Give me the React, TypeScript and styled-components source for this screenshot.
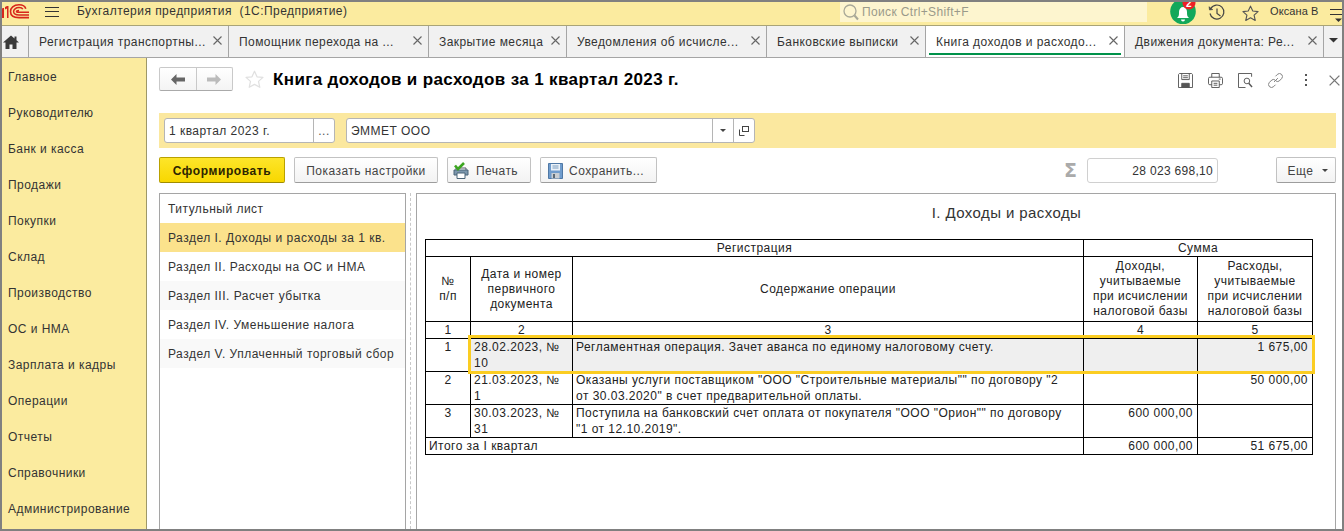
import React from "react";
import styled, { createGlobalStyle } from "styled-components";

const Global = createGlobalStyle`
  html, body { margin: 0; padding: 0; background: #fff; }
  body { font-family: "Liberation Sans", Arial, sans-serif; font-size: 12px; color: #333; letter-spacing: .3px; }
  * { box-sizing: border-box; }
`;

const Frame = styled.div`
  width: 1344px; height: 531px; border: 2px solid #808080; display: flex; flex-direction: column; overflow: hidden; background: #fff;
`;
const TopBar = styled.header`
  height: 24px; flex: none; display: flex; align-items: flex-start; background: #fbeb9f;
  border-bottom: 1px solid #a9a477; position: relative;
`;
const LogoBox = styled.div`width: 43px; height: 23px; flex: none;`;
const Burger = styled.div`
  width: 14px; height: 10px; margin-top: 5px; flex: none; margin-right: 18px;
  border-top: 1px solid #333; border-bottom: 1px solid #333; position: relative;
  &::after { content: ""; position: absolute; left: 0; right: 0; top: 3px; height: 1px; background: #333; }
`;
const AppTitle = styled.div`
  font-size: 12px; line-height: 18px; color: #333; width: 763px; flex: none; letter-spacing: .46px;
`;
const Search = styled.div`
  width: 307px; height: 20px; flex: none; background: #fdf5cf; display: flex; align-items: center;
  padding-left: 3px; gap: 3px; color: #9a9a8a; font-size: 12px; letter-spacing: .35px; margin-right: 23px;
`;
const IconSlot = styled.div<{ $w: number; $ml?: number }>`
  width: ${p => p.$w}px; margin-left: ${p => p.$ml ?? 0}px; flex: none; display: flex; align-items: center; justify-content: center; height: 22px;
`;
const UserName = styled.div`
  font-size: 11px; line-height: 18px; width: 50px; color: #333; margin-left: 11px; letter-spacing: .1px; flex: none;
`;
const TabBar = styled.nav`
  height: 32px; flex: none; display: flex; background: #f1f1f1; border-bottom: 1px solid #a5a5a5;
`;
const HomeTab = styled.div`
  width: 27px; flex: none; border-right: 1px solid #a5a5a5; display: flex; align-items: center; padding-left: 1px;
`;
const Tab = styled.div<{ $w: number; $active?: boolean }>`
  width: ${p => p.$w}px; flex: none; border-right: 1px solid #a5a5a5; position: relative; display: flex;
  align-items: center; padding-left: 10px; font-size: 12px; line-height: 16px; white-space: nowrap;
  color: #333; letter-spacing: .44px; background: ${p => (p.$active ? "#fff" : "transparent")};
  ${p => p.$active && `&::after { content: ""; position: absolute; left: 3px; right: 3px; bottom: 2px; height: 2px; background: #00924a; }`}
`;
const TabClose = styled.span`
  position: absolute; right: 6px; top: 10px; width: 9px; height: 9px; display: flex;
`;
const TabMore = styled.div`
  flex: 1; display: flex; align-items: center; justify-content: center; padding-bottom: 2px;
`;
const Body = styled.div`flex: 1; display: flex; min-height: 0;`;
const Sidebar = styled.aside`
  width: 145px; flex: none; background: #fbeb9f; border-right: 1px solid #9e9868; display: flex; flex-direction: column;
`;
const SideItem = styled.div`
  height: 36px; flex: none; display: flex; align-items: center; padding: 1px 0 0 6px; font-size: 12px; color: #333; letter-spacing: .46px;
`;
const Main = styled.main`
  flex: 1; min-width: 0; display: flex; flex-direction: column; padding: 9px 6px 0 12px; position: relative;
`;
const TitleRow = styled.div`height: 24px; flex: none; display: flex; align-items: center;`;
const NavGroup = styled.div`
  width: 74px; height: 24px; flex: none; display: flex; border: 1px solid #c9c9c9; border-bottom-color: #aaa; border-radius: 2px;
  background: linear-gradient(#fff, #f4f4f4);
`;
const NavBtn = styled.div<{ $split?: boolean }>`
  flex: 1; display: flex; align-items: center; justify-content: center;
  ${p => p.$split && "border-right: 1px solid #c9c9c9;"}
`;
const PageTitle = styled.h1`
  margin: 2px 0 0 -1px; font-size: 17px; line-height: 22px; font-weight: 700; color: #000; letter-spacing: .37px; white-space: nowrap;
`;
const ToolIcons = styled.div`
  position: absolute; top: 13px; right: 0; height: 18px; display: flex; align-items: center;
`;
const FilterBar = styled.div`
  height: 35px; flex: none; margin-top: 22px; background: #fbe89f; padding: 5px; display: flex; gap: 11px;
`;
const Field = styled.div<{ $w: number }>`
  width: ${p => p.$w}px; height: 25px; flex: none; background: #fff; border: 1px solid #b5b5b5; border-radius: 3px;
  display: flex; align-items: center; font-size: 12px; color: #333; letter-spacing: .46px;
`;
const FieldText = styled.div`flex: 1; padding-left: 4px; white-space: nowrap; padding-top: 1px;`;
const FieldBtn = styled.div`
  width: 21px; height: 100%; flex: none; border-left: 1px solid #b5b5b5; display: flex; align-items: center; justify-content: center; color: #555;
`;
const ButtonRow = styled.div`height: 26px; flex: none; margin-top: 9px; display: flex; align-items: center; gap: 9px;`;
const Btn = styled.div<{ $w: number; $primary?: boolean; $pl?: number }>`
  width: ${p => p.$w}px; height: 26px; flex: none; display: flex; align-items: center;
  justify-content: ${p => (p.$pl ? "flex-start" : "center")}; gap: 6px; padding-left: ${p => p.$pl ?? 0}px;
  border-radius: 2px; font-size: 12px; letter-spacing: ${p => (p.$primary ? ".6px" : ".46px")}; padding-top: 1px;
  border: 1px solid ${p => (p.$primary ? "#b9a100" : "#c2c2c2")};
  border-bottom-color: ${p => (p.$primary ? "#a08c00" : "#9d9d9d")};
  background: ${p => (p.$primary ? "linear-gradient(#fde52a, #f8d700)" : "linear-gradient(#fff, #f3f3f3)")};
  color: ${p => (p.$primary ? "#2c2500" : "#444")};
  font-weight: ${p => (p.$primary ? 700 : 400)};
`;
const Sigma = styled.div`
  margin-left: auto; font-size: 19px; font-weight: 700; color: #aaa; width: 14px; letter-spacing: 0; line-height: 20px; font-family: "DejaVu Sans", sans-serif;
`;
const SumField = styled.div`
  width: 131px; height: 25px; flex: none; border: 1px solid #d0d0d0; border-radius: 3px; text-align: right; padding-right: 4px;
  font-size: 12px; line-height: 24px; color: #333; margin-right: 49px;
`;
const MoreBtn = styled(Btn)`gap: 9px; padding-left: 4px;`;
const Content = styled.div`flex: 1; min-height: 0; display: flex; margin-top: 10px;`;
const ListPanel = styled.div`
  width: 247px; flex: none; border: 1px solid #a5a5a5; border-bottom: none; display: flex; flex-direction: column;
`;
const ListItem = styled.div<{ $selected?: boolean; $alt?: boolean }>`
  height: 29px; flex: none; display: flex; align-items: center; padding: 1px 0 0 8px; font-size: 12px; color: #333; letter-spacing: .5px; white-space: nowrap;
  background: ${p => (p.$selected ? "#fbe28c" : p.$alt ? "#f9f9f9" : "#fff")};
`;
const Splitter = styled.div`
  width: 10px; flex: none; position: relative;
  &::after { content: ""; position: absolute; left: 4px; top: 0; bottom: 0; border-left: 1px dashed #c8c8c8; }
`;
const ReportPanel = styled.div`
  width: 920px; flex: none; border: 1px solid #a5a5a5; border-bottom: none; padding-left: 8px;
`;
const ReportTitle = styled.div`
  height: 45px; width: 887px; text-align: center; font-size: 15px; line-height: 18px; padding: 10px 0 0 276px; color: #333; letter-spacing: .42px;
`;
const TableWrap = styled.div`position: relative; width: 887px;`;
const Report = styled.table`
  border-collapse: collapse; table-layout: fixed; width: 887px; font-size: 12px; color: #222; line-height: 15px; letter-spacing: .47px;
`;
const Row = styled.tr<{ $h: number }>`height: ${p => p.$h}px;`;
const Cell = styled.td<{ $align?: "left" | "center" | "right"; $gray?: boolean }>`
  border: 1px solid #000; padding: ${p => (p.$align === "center" ? "0 3px" : "0 4px 0 3px")}; vertical-align: middle;
  text-align: ${p => p.$align ?? "left"}; background: ${p => (p.$gray ? "#efefef" : "transparent")}; overflow: hidden;
`;
const BodyCell = styled(Cell)`vertical-align: top; line-height: 16px; white-space: pre-line;`;
const RowMark = styled.div`
  position: absolute; left: 43px; top: 96px; width: 847px; height: 39px; border: 3px solid #fbcd22; pointer-events: none;
`;

const X = ({ s = 9, c = "#666" }: { s?: number; c?: string }) => (
  <svg width={s} height={s} viewBox="0 0 9 9"><path d="M.5.5l8 8M8.5.5l-8 8" stroke={c} strokeWidth="1.1" fill="none" /></svg>
);

const Logo = () => (
  <svg width="30" height="20" viewBox="0 0 30 20">
    <path d="M0 6.500l1-.5h1V16H0z" fill="#d8261c" />
    <path d="M3 5l2-1h1.500v12H5V6.500L3 7.500z" fill="#d8261c" />
    <path d="M27 15.600H17C11.500 15.600 8.500 13 8.500 9.500S11.500 2.800 17 2.800c3.800 0 6 1.200 6.800 4" fill="none" stroke="#d8261c" strokeWidth="1.600" />
    <path d="M27 12.900H17c-3.300 0-5.400-1.400-5.400-3.400s2.100-3.900 5.400-3.900c2 0 3.300.5 3.800 1.500" fill="none" stroke="#d8261c" strokeWidth="1.500" />
    <path d="M27 10.200H17c-1.500 0-2.500-.2-2.500-.8s1-1 2.500-1" fill="none" stroke="#d8261c" strokeWidth="1.500" />
  </svg>
);
const Magnifier = () => (
  <svg width="16" height="18" viewBox="0 0 16 18"><circle cx="7" cy="8" r="6" fill="none" stroke="#a8a898" strokeWidth="1.3" /><path d="M11.500 12.500l3.500 4" stroke="#a8a898" strokeWidth="2" /></svg>
);
const Bell = () => (
  <svg width="26" height="22" viewBox="0 0 26 22" style={{ overflow: "hidden" }}>
    <circle cx="13" cy="9.500" r="12.800" fill="#13a85a" />
    <path d="M7 16c2-1.500 2-3 2-6 0-3 1.800-5 4-5s4 2 4 5c0 3 0 4.500 2 6z" fill="#fff" />
    <path d="M11 17.500h4a2 2 0 01-4 0z" fill="#fff" />
    <circle cx="19" cy="1" r="6.500" fill="#ed2024" />
    <text x="19" y="5" fontSize="10" fontWeight="700" fill="#fff" textAnchor="middle" fontFamily="Liberation Sans">2</text>
  </svg>
);
const History = () => (
  <svg width="18" height="18" viewBox="0 0 18 18" fill="none" stroke="#444" strokeWidth="1.200">
    <path d="M2.800 4.500A7 7 0 112 9.500" /><path d="M1 2.500l.5 3.500 3.500-.5" fill="#444" strokeWidth=".6" /><path d="M9 4.500V9.500l3.500 2.500" />
  </svg>
);
const StarIcon = ({ c = "#555", s = 17, w = 1.2 }: { c?: string; s?: number; w?: number }) => (
  <svg width={s} height={s} viewBox="0 0 18 18"><path d="M9 1.200l2.400 5.200 5.600.6-4.200 3.800 1.200 5.600L9 13.600 4 16.400l1.200-5.600L1 7l5.600-.6z" fill="none" stroke={c} strokeWidth={w} strokeLinejoin="round" /></svg>
);
const Menu = () => (
  <svg width="16" height="22" viewBox="0 0 16 22"><path d="M1 7.500h14M1 12.500h14" stroke="#333" /><path d="M6 16.500h7l-3.500 3.500z" fill="#333" /></svg>
);
const Caret = ({ c = "#444", w = 8 }: { c?: string; w?: number }) => (
  <svg width={w} height={w / 2} viewBox="0 0 8 4"><path d="M0 0h8L4 4z" fill={c} /></svg>
);
const Home = () => (
  <svg width="16" height="14" viewBox="0 0 16 14"><path d="M8 .5L0 7.500h2.500V14h4V9.500h3V14h4V7.500H16l-2.500-2.200V1.500h-2v2z" fill="#3a3a3a" /></svg>
);
const Arrow = ({ left, c }: { left?: boolean; c: string }) => (
  <svg width="14" height="11" viewBox="0 0 14 11" style={{ transform: left ? "none" : "scaleX(-1)" }}><path d="M0 5.500L5.500 0v3.500H14v4H5.500V11z" fill={c} /></svg>
);
const SaveIcon = () => (
  <svg width="15" height="15" viewBox="0 0 16 16" fill="none" stroke="#555" strokeWidth="1"><path d="M1.500 .5h13l1 1v14H.5V1.500z" /><path d="M4 .5v6.500h8V.5M5.500 3h5M5.500 5h5" /><path d="M4 11h8v4.500H4z" fill="#555" /></svg>
);
const PrintIcon = () => (
  <svg width="15" height="15" viewBox="0 0 16 16" fill="none" stroke="#555"><path d="M4 4.500v-4h8v4" /><rect x=".5" y="4.500" width="15" height="8" rx="1.500" /><path d="M4 8.500h8v7H4zM6 11h4M6 13h4" fill="#fff" /><path d="M11.500 6.500h2" /></svg>
);
const Preview = () => (
  <svg width="15" height="15" viewBox="0 0 16 16" fill="none" stroke="#555"><path d="M14.500 4V.5H.5v15H8" /><circle cx="9.500" cy="8.500" r="3" /><path d="M11.500 11l3.500 4" strokeWidth="1.500" /></svg>
);
const LinkIcon = () => (
  <svg width="15" height="15" viewBox="0 0 16 16" fill="none" stroke="#777"><path d="M6.500 9.500l4-4" /><path d="M8 3.500l2-2a3 3 0 014.500 4.500l-2.500 2.500a3 3 0 01-3.500 0" /><path d="M8 12.500l-2 2a3 3 0 01-4.500-4.500L4 7.500a3 3 0 013.500 0" /></svg>
);
const Dots = () => (
  <svg width="4" height="14" viewBox="0 0 4 14"><rect x="1" y="1" width="2" height="2" fill="#555" /><rect x="1" y="6" width="2" height="2" fill="#555" /><rect x="1" y="11" width="2" height="2" fill="#555" /></svg>
);
const OpenIcon = () => (
  <svg width="10" height="10" viewBox="0 0 10 10" fill="none" stroke="#444"><rect x="3.500" y=".5" width="6" height="5" /><path d="M.5 3.500v6h5" /></svg>
);
const PrintBtnIcon = () => (
  <svg width="17" height="17" viewBox="0 0 17 17">
    <path d="M3 6h10v3H3z" fill="#fff" stroke="#556" />
    <path d="M1 8h14v5H1z" fill="#7c97ad" stroke="#4a6478" />
    <path d="M4 11h8v5.500H4z" fill="#fff" stroke="#4a6478" />
    <path d="M2 3.500l3 3.500 6-6" fill="none" stroke="#3ba51f" strokeWidth="2.600" />
  </svg>
);
const SaveBtnIcon = () => (
  <svg width="15" height="16" viewBox="0 0 15 16">
    <path d="M.5.5h14v15H.5z" fill="#6f9ccd" stroke="#4f78a5" />
    <path d="M3 1h9v6.500H3z" fill="#eaf1f8" />
    <path d="M4.500 3h6M4.500 5h6" stroke="#7b9cbd" />
    <path d="M3.500 10h8v5.500h-8z" fill="#c9ced3" />
    <path d="M5 11h2v4H5z" fill="#5d6a75" />
  </svg>
);

const tabs = [
  { t: "Регистрация транспортны...", w: 200 },
  { t: "Помощник перехода на ...", w: 200 },
  { t: "Закрытие месяца", w: 138 },
  { t: "Уведомления об исчисле...", w: 200 },
  { t: "Банковские выписки", w: 159 },
  { t: "Книга доходов и расходо...", w: 199, active: true },
  { t: "Движения документа: Ре...", w: 199 },
];
const menu = ["Главное", "Руководителю", "Банк и касса", "Продажи", "Покупки", "Склад", "Производство", "ОС и НМА", "Зарплата и кадры", "Операции", "Отчеты", "Справочники", "Администрирование"];
const sections = ["Титульный лист", "Раздел I. Доходы и расходы за 1 кв.", "Раздел II. Расходы на ОС и НМА", "Раздел III. Расчет убытка", "Раздел IV. Уменьшение налога", "Раздел V. Уплаченный торговый сбор"];

type Op = { n: string; doc: string; text: string; inc: string; exp: string };
const ops: Op[] = [
  { n: "1", doc: "28.02.2023, №\n10", text: "Регламентная операция. Зачет аванса по единому налоговому счету.", inc: "", exp: "1 675,00" },
  { n: "2", doc: "21.03.2023, №\n1", text: "Оказаны услуги поставщиком \"ООО \"Строительные материалы\"\" по договору \"2\nот 30.03.2020\" в счет предварительной оплаты.", inc: "", exp: "50 000,00" },
  { n: "3", doc: "30.03.2023, №\n31", text: "Поступила на банковский счет оплата от покупателя \"ООО \"Орион\"\" по договору\n\"1 от 12.10.2019\".", inc: "600 000,00", exp: "" },
];

export default function App() {
  return (
    <Frame>
      <Global />
      <TopBar>
        <LogoBox><Logo /></LogoBox>
        <Burger />
        <AppTitle>Бухгалтерия предприятия&nbsp; (1С:Предприятие)</AppTitle>
        <Search><Magnifier />Поиск Ctrl+Shift+F</Search>
        <IconSlot $w={26}><Bell /></IconSlot>
        <IconSlot $w={18} $ml={12}><History /></IconSlot>
        <IconSlot $w={18} $ml={15}><StarIcon /></IconSlot>
        <UserName>Оксана В</UserName>
        <IconSlot $w={16} $ml={9}><Menu /></IconSlot>
      </TopBar>
      <TabBar>
        <HomeTab><Home /></HomeTab>
        {tabs.map(t => (
          <Tab key={t.t} $w={t.w} $active={t.active}>
            {t.t}
            <TabClose><X /></TabClose>
          </Tab>
        ))}
        <TabMore><Caret c="#333" w={9} /></TabMore>
      </TabBar>
      <Body>
        <Sidebar>{menu.map(m => <SideItem key={m}>{m}</SideItem>)}</Sidebar>
        <Main>
          <TitleRow>
            <NavGroup>
              <NavBtn $split><Arrow left c="#666" /></NavBtn>
              <NavBtn><Arrow c="#bbb" /></NavBtn>
            </NavGroup>
            <IconSlot $w={19} $ml={12}><StarIcon c="#e0e0e0" s={19} w={1.2} /></IconSlot>
            <IconSlot $w={10} />
            <PageTitle>Книга доходов и расходов за 1 квартал 2023 г.</PageTitle>
          </TitleRow>
          <ToolIcons>
            <IconSlot $w={16}><SaveIcon /></IconSlot>
            <IconSlot $w={16} $ml={14}><PrintIcon /></IconSlot>
            <IconSlot $w={16} $ml={14}><Preview /></IconSlot>
            <IconSlot $w={16} $ml={14}><LinkIcon /></IconSlot>
            <IconSlot $w={4} $ml={21}><Dots /></IconSlot>
            <IconSlot $w={11} $ml={21}><X s={11} c="#777" /></IconSlot>
            <IconSlot $w={2} />
          </ToolIcons>
          <FilterBar>
            <Field $w={171}>
              <FieldText>1 квартал 2023 г.</FieldText>
              <FieldBtn>...</FieldBtn>
            </Field>
            <Field $w={409}>
              <FieldText>ЭММЕТ ООО</FieldText>
              <FieldBtn><Caret w={6} /></FieldBtn>
              <FieldBtn><OpenIcon /></FieldBtn>
            </Field>
          </FilterBar>
          <ButtonRow>
            <Btn $w={126} $primary>Сформировать</Btn>
            <Btn $w={144}>Показать настройки</Btn>
            <Btn $w={84} $pl={5}><PrintBtnIcon />Печать</Btn>
            <Btn $w={117} $pl={7}><SaveBtnIcon />Сохранить...</Btn>
            <Sigma>Σ</Sigma>
            <SumField>28 023 698,10</SumField>
            <MoreBtn $w={60}>Еще <Caret w={6} /></MoreBtn>
          </ButtonRow>
          <Content>
            <ListPanel>
              {sections.map((s, i) => (
                <ListItem key={s} $selected={i === 1} $alt={i === 3 || i === 5}>{s}</ListItem>
              ))}
            </ListPanel>
            <Splitter />
            <ReportPanel>
              <ReportTitle>I. Доходы и расходы</ReportTitle>
              <TableWrap>
                <Report>
                  <colgroup>
                    <col width={45} /><col width={102} /><col width={511} /><col width={114} /><col width={115} />
                  </colgroup>
                  <tbody>
                    <Row $h={17}>
                      <Cell colSpan={3} $align="center">Регистрация</Cell>
                      <Cell colSpan={2} $align="center">Сумма</Cell>
                    </Row>
                    <Row $h={65}>
                      <Cell $align="center">№<br />п/п</Cell>
                      <Cell $align="center">Дата и номер<br />первичного<br />документа</Cell>
                      <Cell $align="center">Содержание операции</Cell>
                      <Cell $align="center">Доходы,<br />учитываемые<br />при исчислении<br />налоговой базы</Cell>
                      <Cell $align="center">Расходы,<br />учитываемые<br />при исчислении<br />налоговой базы</Cell>
                    </Row>
                    <Row $h={17}>
                      {["1", "2", "3", "4", "5"].map(n => <Cell key={n} $align="center">{n}</Cell>)}
                    </Row>
                    {ops.map((o, i) => (
                      <Row $h={33} key={o.n}>
                        <BodyCell $align="center">{o.n}</BodyCell>
                        <BodyCell $gray={i === 0}>{o.doc}</BodyCell>
                        <BodyCell $gray={i === 0}>{o.text}</BodyCell>
                        <BodyCell $align="right" $gray={i === 0}>{o.inc}</BodyCell>
                        <BodyCell $align="right" $gray={i === 0}>{o.exp}</BodyCell>
                      </Row>
                    ))}
                    <Row $h={17}>
                      <Cell colSpan={3}>Итого за I квартал</Cell>
                      <Cell $align="right">600 000,00</Cell>
                      <Cell $align="right">51 675,00</Cell>
                    </Row>
                  </tbody>
                </Report>
                <RowMark />
              </TableWrap>
            </ReportPanel>
          </Content>
        </Main>
      </Body>
    </Frame>
  );
}
